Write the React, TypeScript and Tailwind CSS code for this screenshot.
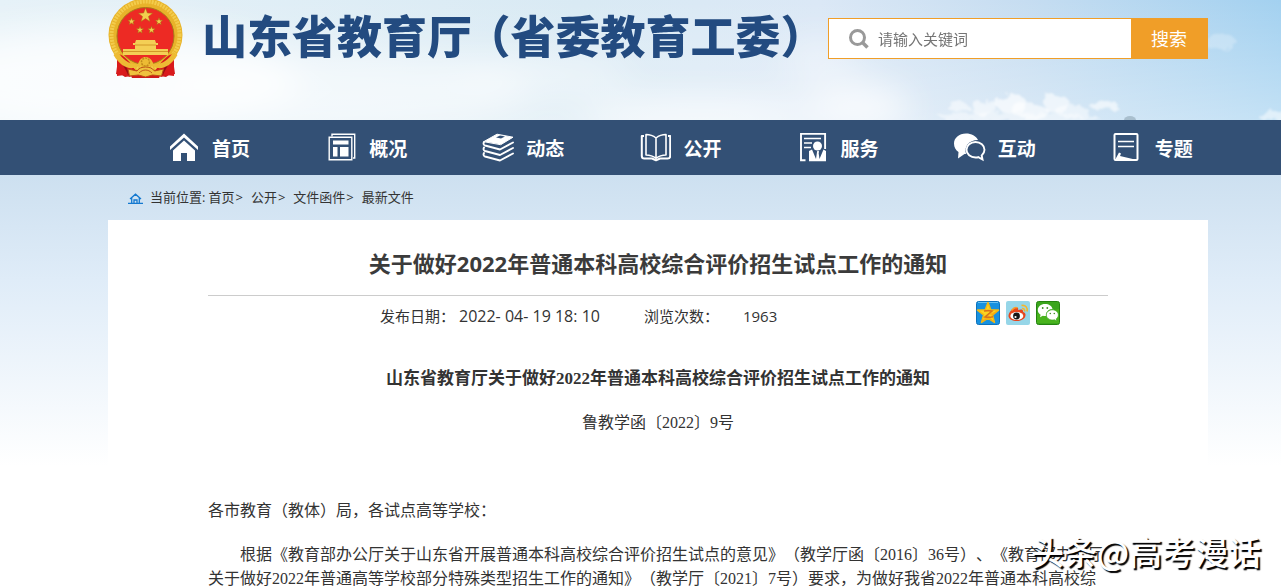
import React, { useState } from 'react';

const star = (cx: number, cy: number, r: number) => {
  const points = [];
  for (let i = 0; i < 10; i++) {
    const radius = i % 2 === 0 ? r : r * 0.42;
    const angle = (Math.PI / 5) * i - Math.PI / 2;
    points.push(`${(cx + radius * Math.cos(angle)).toFixed(1)},${(cy + radius * Math.sin(angle)).toFixed(1)}`);
  }
  return points.join(' ');
};

const Sky = () => (
  <svg className="absolute inset-0 h-full w-full" viewBox="0 0 1281 120" preserveAspectRatio="none" aria-hidden="true">
    <defs>
      <linearGradient id="skyBase" x1="0" y1="0" x2="1" y2="0">
        <stop offset="0" stopColor="#e6f2f8" />
        <stop offset="0.45" stopColor="#d9eaf4" />
        <stop offset="0.64" stopColor="#dbe8f6" />
        <stop offset="0.8" stopColor="#c6ddf1" />
        <stop offset="1" stopColor="#a3d1f0" />
      </linearGradient>
      <linearGradient id="skyFade" x1="0" y1="0" x2="0" y2="1">
        <stop offset="0" stopColor="#fff" stopOpacity="0" />
        <stop offset="1" stopColor="#fff" stopOpacity="0.35" />
      </linearGradient>
      <filter id="soft" x="-50%" y="-100%" width="200%" height="300%">
        <feGaussianBlur stdDeviation="18" />
      </filter>
      <filter id="puff" x="-50%" y="-50%" width="200%" height="200%">
        <feTurbulence type="fractalNoise" baseFrequency="0.09" numOctaves="3" seed="4" result="noise" />
        <feDisplacementMap in="SourceGraphic" in2="noise" scale="14" />
        <feGaussianBlur stdDeviation="1.3" />
      </filter>
    </defs>
    <rect width="1281" height="120" fill="url(#skyBase)" />
    <rect width="1281" height="120" fill="url(#skyFade)" />
    <g fill="#fff" filter="url(#soft)">
      <ellipse cx="110" cy="80" rx="190" ry="55" opacity="0.75" />
      <ellipse cx="340" cy="90" rx="190" ry="40" opacity="0.5" />
      <ellipse cx="540" cy="75" rx="90" ry="18" opacity="0.45" />
      <ellipse cx="700" cy="118" rx="120" ry="18" opacity="0.7" />
      <ellipse cx="860" cy="108" rx="50" ry="22" opacity="0.8" />
      <ellipse cx="820" cy="60" rx="40" ry="20" opacity="0.4" />
    </g>
    <g fill="#fff" filter="url(#puff)">
      <ellipse cx="958" cy="107" rx="11" ry="5" opacity="0.5" />
      <ellipse cx="985" cy="108" rx="14" ry="8" opacity="0.55" />
      <ellipse cx="1012" cy="104" rx="15" ry="10" opacity="0.65" />
      <ellipse cx="1030" cy="111" rx="18" ry="8" opacity="0.6" />
      <ellipse cx="1056" cy="104" rx="14" ry="9" opacity="0.6" />
      <ellipse cx="1072" cy="111" rx="17" ry="6" opacity="0.5" />
      <ellipse cx="1104" cy="106" rx="15" ry="4" opacity="0.6" />
      <ellipse cx="1020" cy="118" rx="80" ry="5" opacity="0.45" />
      <ellipse cx="1220" cy="42" rx="16" ry="8" opacity="0.25" />
      <ellipse cx="1275" cy="117" rx="16" ry="5" opacity="0.5" />
    </g>
    <ellipse cx="1130" cy="120" rx="6" ry="4" fill="#a9bfce" />
  </svg>
);

const Emblem = () => (
  <svg className="h-[78px] w-[76px] shrink-0" viewBox="0 0 76 78" role="img" aria-label="国徽">
    <path d="M11 52 8 74l6 1 3 2 6-1 1 2h27l1-2 6 1 3-2 6-1-3-22z" fill="#cf1a1c" />
    <ellipse cx="37.5" cy="35" rx="37" ry="36.500" fill="#e8b32a" />
    <ellipse cx="37.5" cy="35" rx="34" ry="33.500" fill="none" stroke="#f3cc4c" strokeWidth="4" strokeDasharray="2 1" />
    <circle cx="37.5" cy="36" r="28.500" fill="#ed2a24" stroke="#a8781a" />
    <path d="M9 54c5 0 9 4 14 10l5 7-6 6-5-2-8 1c0-8 0-16 0-22zM66 54c-5 0-9 4-14 10l-5 7 6 6 5-2 8 1c0-8 0-16 0-22z" fill="#d91a1c" />
    <path d="M13 58c2 7 6 11 8 17M62 58c-2 7-6 11-8 17" stroke="#990f12" strokeWidth="2" fill="none" />
    <g fill="#f2cf4e" stroke="#a66c10" strokeWidth="0.5">
      <polygon points={star(37.5, 15.5, 7.5)} />
      <polygon points={star(23.5, 21.5, 3.8)} />
      <polygon points={star(51, 21.5, 3.8)} />
      <polygon points={star(32, 30, 3.8)} />
      <polygon points={star(43.5, 30, 3.8)} />
    </g>
    <path d="M28 40h19l1 3h2v2h-2v4H27v-4h-2v-2h2zM15 49h45v6H15z" fill="#f4cf55" />
    <path d="M27 45h21M15 51.500h45" stroke="#c98c1d" strokeWidth="0.8" />
    <path d="M10 52c5 8 12 13 20 12 2-5 4-7 7.500-7s6 2 8 7c8 1 15-4 20-12l4 3c-6 10-13 14-20 13-4-1-8-3-12-3s-8 2-12 3c-7 1-14-3-20-13z" fill="#edbb34" />
    <path d="M20 69l9 2c2-3 5-4 8.500-4s7 1 9 4l9-2-2 7-9-1-7 2-7-2-9 1z" fill="#efc23f" stroke="#bd4d14" strokeWidth="1" />
    <circle cx="37.5" cy="62" r="4" fill="none" stroke="#c28a1c" strokeWidth="1.5" strokeDasharray="2 1" />
    <path d="M31 73c4-4 9-4 13 0" fill="none" stroke="#c2571a" />
  </svg>
);

const iconProps = {
  className: 'h-[30px] w-8 shrink-0',
  viewBox: '0 0 32 30',
  fill: 'none',
  stroke: '#fff',
  strokeWidth: 1.6,
  'aria-hidden': true,
};

const HomeIcon = () => (
  <svg {...iconProps} stroke="none" fill="#fff">
    <path d="M16 .500 2 13.500v3.500L16 4.500l14 12.500v-3.500z" />
    <path d="M16 7.500 5 17.500V28h8v-8h6v8h8V17.500z" />
  </svg>
);

const OverviewIcon = () => (
  <svg {...iconProps} strokeWidth="1.4">
    <path d="M7 3.500V1.200h22.700V25H28" />
    <path d="M4.200 4.200h22.600v22.600H4.200z" />
    <path d="M8 7.500h15.500v4H8zM8 14h4.500v9.500H8zM15 14h8.500v9.500H15z" fill="#fff" stroke="none" />
  </svg>
);

const NewsIcon = () => (
  <svg {...iconProps} strokeLinejoin="round" strokeLinecap="round" strokeWidth="1.9">
    <path d="M2 8.500 15 1.200l16 3L19 11.500z" fill="#fff" strokeWidth="1" />
    <path d="M14 4.500 18 2.500l5 1-4 2z" fill="#335075" stroke="none" />
    <path d="M2 9c-.8 1.500-.5 3 1 3.500L18 16.500l13-7" />
    <path d="M2 14.500c-.8 1.500-.5 3 1 3.500L18 22l13-7" />
    <path d="M2 20c-.8 1.500-.5 3 1 3.500L18 27.500l13-7" />
  </svg>
);

const BookIcon = () => (
  <svg {...iconProps} strokeLinejoin="round">
    <path d="M17 5c-3-2.500-6-3.500-10-3.500v20.500c4 0 7 1 10 3.500 3-2.500 6-3.500 10-3.500V1.500c-4 0-7 1-10 3.500zM17 5v20" />
    <path d="M5 3H2.800v20c0 2 .8 2.500 2.500 2.500H13l4 1.800 4-1.800h7.700c1.700 0 2.500-.5 2.500-2.500V3H29" strokeWidth="2" />
  </svg>
);

const ServiceIcon = () => (
  <svg {...iconProps}>
    <path d="M8.500 27.200H4V.900h24.100V16" strokeWidth="1.900" />
    <path d="M7 5.500h17M7 10h8M7 14.500h7" />
    <circle cx="20.500" cy="13" r="4.500" fill="#fff" stroke="none" />
    <path d="M12 28.200V18l3-1.500 4 9.500 1-7h1.500l1 7 4-9.500 2.500 1.500v10.200z" fill="#fff" stroke="none" />
    <path d="M20 18h2l-.5 2h-1z" fill="#fff" stroke="none" />
  </svg>
);

const ChatIcon = () => (
  <svg {...iconProps}>
    <path d="M12 .500C5 .500 0 5 0 10.500c0 4 1.800 6.500 4.500 8.500L4 25.500l6.500-4.500h1.500C10 13.500 14.500 7 24 7 22 3 17.500.500 12 .500z" fill="#fff" stroke="none" />
    <path d="M21.500 9c-5 0-9 3.500-9 7.800s4 7.700 9 7.700c1 0 2 0 2.800-.4l4.200 2.400-.8-4c1.800-1.500 2.800-3.500 2.800-5.700 0-4.300-4-7.800-9-7.800z" strokeWidth="1.900" />
  </svg>
);

const TopicIcon = () => (
  <svg {...iconProps}>
    <rect x="3.500" y="1" width="23" height="26" rx="1" strokeWidth="2" />
    <path d="M7 8.500h16M7 13.500h16" />
    <path d="M4 27 8 19.500l2 1-1 2.500 17 4z" fill="#fff" stroke="none" />
  </svg>
);

const navItems = [
  { label: '首页', Icon: HomeIcon },
  { label: '概况', Icon: OverviewIcon },
  { label: '动态', Icon: NewsIcon },
  { label: '公开', Icon: BookIcon },
  { label: '服务', Icon: ServiceIcon },
  { label: '互动', Icon: ChatIcon },
  { label: '专题', Icon: TopicIcon },
];

const crumbs = ['首页', '公开', '文件函件', '最新文件'];

const QzoneIcon = () => (
  <svg className="size-6" viewBox="0 0 24 24" aria-hidden="true">
    <rect x="0.5" y="0.5" width="23" height="23" rx="2" fill="#1791e0" stroke="#0d72bb" />
    <path d="M2 1.500h20" stroke="#69c3f4" />
    <polygon points={star(12, 12.5, 11)} fill="#fcd420" stroke="#f3b912" strokeWidth="1.500" strokeLinejoin="round" />
    <path d="M5 21l7-8 6 8-6-3zM12 13l10-3-5 5z" fill="#f5a414" opacity="0.6" />
    <path d="M8 10c3-.5 5-.5 8 0l-7 6c3 .5 5 .3 8-.3" fill="none" stroke="#d9741a" strokeWidth="1.600" />
  </svg>
);

const WeiboIcon = () => (
  <svg className="size-6" viewBox="0 0 24 24" aria-hidden="true">
    <rect width="24" height="24" rx="2" fill="#96d6e8" />
    <path d="M2.500 15c0-4 5-8.500 8-8.500 1.500 0 2 1 1.500 2.500 3-1.200 5.500-.7 5 2 2 .6 2.500 1.800 2.500 3 0 3.500-4 6-8.500 6s-8.500-2-8.500-5z" fill="#e8451c" />
    <path d="M5.500 9.500c2-2.500 4.500-3.500 6-2.500" stroke="#f79a28" strokeWidth="1.500" fill="none" />
    <ellipse cx="10.800" cy="15" rx="6.500" ry="4" fill="#fff" />
    <circle cx="10.500" cy="15" r="3.400" fill="#161616" />
    <circle cx="9.500" cy="16" r="1.100" fill="#fff" />
    <path d="M15.500 4.500c4-.8 6.500 2 5.500 6M16 7.500c2-.3 3 1 2.500 3" fill="none" stroke="#f5b62e" strokeWidth="1.600" />
  </svg>
);

const WechatIcon = () => (
  <svg className="size-6" viewBox="0 0 24 24" aria-hidden="true">
    <rect x="0.5" y="0.5" width="23" height="23" rx="2" fill="#3aa51c" stroke="#24840f" />
    <path d="M1 13l22-5v14H1z" fill="#54bd1e" opacity="0.6" />
    <path d="M9 3c-4.200 0-7.200 2.700-7.200 6 0 2 1 3.600 2.800 4.800L4 16.200l2.800-1.500c1 .3 3 .4 3.400.3C9.500 11 12.500 8 16.500 8 16 5 13 3 9 3z" fill="#fff" />
    <path d="M16.300 8.800c-3.400 0-6 2.300-6 5.100s2.600 5.100 6 5.100c.7 0 1.400 0 2-.3l2.500 1.600-.6-2.400c1.400-1 2.200-2.300 2.200-4 0-2.800-2.700-5.100-6.100-5.100z" fill="#fff" stroke="#3aa51c" strokeWidth="0.700" />
    <g fill="#3f8f26">
      <circle cx="6.700" cy="7" r="0.900" />
      <circle cx="11.300" cy="7" r="0.900" />
      <circle cx="14.300" cy="12.500" r="0.800" />
      <circle cx="18.300" cy="12.500" r="0.800" />
    </g>
  </svg>
);

const shareLinks = [
  { name: 'QQ空间', Icon: QzoneIcon },
  { name: '新浪微博', Icon: WeiboIcon },
  { name: '微信', Icon: WechatIcon },
];

const App = () => {
  const [keyword, setKeyword] = useState('');

  return (
    <div className="relative flex h-screen flex-col overflow-hidden bg-white font-['Open_Sans','Noto_Sans_CJK_SC',sans-serif] text-[#333] [text-spacing-trim:space-all]">
      <header className="relative h-[120px] shrink-0 pr-[73px] pl-[108px]">
        <Sky />
        <div className="relative flex items-start justify-between">
          <div className="flex items-start gap-[18px]">
            <Emblem />
            <h1 className="flex gap-4 font-['Noto_Sans_CJK_SC',sans-serif] text-[45px] leading-[70px] font-black whitespace-nowrap text-[#234b80] [font-feature-settings:'halt']">
              <span>山东省教育厅</span>
              <span>（省委教育工委）</span>
            </h1>
          </div>
          <form
            className="mt-[18px] flex h-[41px] w-[380px] shrink-0 border border-[#f09e28] bg-white"
            onSubmit={(e) => e.preventDefault()}
          >
            <label htmlFor="keyword" className="flex w-[49px] shrink-0 items-center pl-5">
              <svg className="size-5" viewBox="0 0 20 20" fill="none" stroke="#999" aria-hidden="true">
                <circle cx="8.500" cy="8.500" r="7" strokeWidth="3" />
                <path d="M13.500 13.500 18.500 18.500" strokeWidth="3.500" />
              </svg>
            </label>
            <input
              id="keyword"
              type="text"
              aria-label="请输入关键词"
              placeholder="请输入关键词"
              value={keyword}
              onChange={(e) => setKeyword(e.target.value)}
              className="min-w-0 flex-1 pt-0.5 text-[15px] outline-none placeholder:text-[#757575]"
            />
            <button type="submit" className="w-[76px] bg-[#f09e28] text-lg text-white">
              搜索
            </button>
          </form>
        </div>
      </header>

      <nav className="shrink-0 bg-[#335075] pr-[73px] pl-[108px]">
        <ul className="grid h-[55px] grid-cols-7">
          {navItems.map(({ label, Icon }) => (
            <li key={label}>
              <a href="#" className="flex h-full items-center gap-3 pl-[60px] text-[19px] font-bold whitespace-nowrap text-white">
                <Icon />
                <span className="pt-[3px]">{label}</span>
              </a>
            </li>
          ))}
        </ul>
      </nav>

      <main className="shrink-0 bg-linear-to-b from-[#cde0f0] via-[#dfecf8] via-25% to-white to-70% pr-[73px] pl-[108px]">
        <div className="flex h-[45px] items-center pt-px pl-5 text-[13px]">
          <svg className="mr-[7px] h-[11px] w-[15px]" viewBox="0 0 15 11" fill="none" stroke="#1479d0" strokeWidth="1.300" aria-hidden="true">
            <path d="M2 6 7.500 1.200 13 6M3.700 5v5M11.300 5v5M6 10V7h3v3M0 10.300h15" />
          </svg>
          <span className="mr-[3px]">当前位置:</span>
          {crumbs.map((crumb, i) => (
            <React.Fragment key={crumb}>
              <a href="#">{crumb}</a>
              {i < crumbs.length - 1 && <span className="mr-2 ml-px">&gt;</span>}
            </React.Fragment>
          ))}
        </div>

        <article className="bg-white px-[100px]">
          <h2 className="border-b border-[#ccc] pt-[26px] pb-3.5 text-center text-[22px] leading-[35px] font-bold text-[#3b3b3b]">
            关于做好2022年普通本科高校综合评价招生试点工作的通知
          </h2>
          <div className="flex h-[50px] items-start pr-12 pl-[172px] text-[15px] leading-5">
            <span className="mt-2.5">发布日期：</span>
            <span className="mt-2.5 ml-1 text-base leading-5">2022- 04- 19 18: 10</span>
            <span className="mt-2.5 ml-11">浏览次数：</span>
            <span className="mt-2.5 ml-6">1963</span>
            <div className="mt-[5px] ml-auto flex gap-1.5">
              {shareLinks.map(({ name, Icon }) => (
                <a key={name} href="#" aria-label={name}>
                  <Icon />
                </a>
              ))}
            </div>
          </div>

          <div className="flex flex-col gap-5 pt-[21px] font-['Liberation_Serif','Noto_Sans_CJK_SC',serif] text-base leading-6">
            <p className="text-center text-[17px] font-bold">山东省教育厅关于做好2022年普通本科高校综合评价招生试点工作的通知</p>
            <p className="text-center">鲁教学函〔2022〕9号</p>
            <p>&nbsp;</p>
            <p>各市教育（教体）局，各试点高等学校：</p>
            <p className="indent-8">
              根据《教育部办公厅关于山东省开展普通本科高校综合评价招生试点的意见》（教学厅函〔2016〕36号）、《教育部办公厅关于做好2022年普通高等学校部分特殊类型招生工作的通知》（教学厅〔2021〕7号）要求，为做好我省2022年普通本科高校综
            </p>
          </div>
        </article>
      </main>

      <div className="absolute right-5 bottom-3 font-['Noto_Sans_CJK_SC',sans-serif] text-[33px] leading-[50px] font-medium text-white [text-shadow:2px_2px_1px_#000]">
        头条@高考漫话
      </div>
    </div>
  );
};

export default App;
